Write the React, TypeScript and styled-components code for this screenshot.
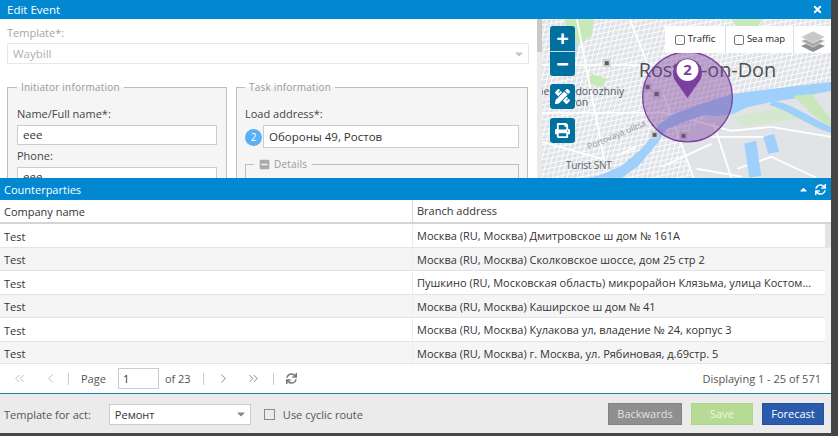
import styled, { createGlobalStyle } from 'styled-components';
import { ChevronLeft, ChevronRight, ChevronsLeft, ChevronsRight } from 'lucide-react';
import { FaTimes, FaSync, FaPrint, FaPencilRuler, FaMinusSquare, FaCaretDown, FaCaretUp } from 'react-icons/fa';

const GlobalStyle = createGlobalStyle`
  html, body { margin: 0; padding: 0; background: #454545; overflow: hidden; }
  * { box-sizing: border-box; }
  body { font-family: "Open Sans", "Liberation Sans", sans-serif; font-size: 11px; color: #333; }
`;

const addresses = [
  'Москва (RU, Москва) Дмитровское ш дом № 161А',
  'Москва (RU, Москва) Сколковское шоссе, дом 25 стр 2',
  'Пушкино (RU, Московская область) микрорайон Клязьма, улица Костомаровская, дом 5',
  'Москва (RU, Москва) Каширское ш дом № 41',
  'Москва (RU, Москва) Кулакова ул, владение № 24, корпус 3',
  'Москва (RU, Москва) г. Москва, ул. Рябиновая, д.69стр. 5',
];

const rowHeights = [24, 23, 24, 23, 24, 22];
const metroStops = [
  [65, 44],
  [106, 68],
  [115, 75],
  [113, 116],
  [142, 117],
];

function CityMap() {
  const streets: string[] = [];
  for (let i = -20; i < 80; i++) {
    const offset = i * 5;
    streets.push(`M${offset} -20 L${offset - 55} 200`);
    streets.push(`M-40 ${offset + 14} L330 ${offset - 60}`);
  }
  return (
    <MapSvg viewBox="0 0 290 159">
      <defs>
        <filter id="soft">
          <feGaussianBlur stdDeviation="0.25" />
        </filter>
      </defs>
      <rect width="290" height="159" fill="#dfe2e6" />
      <g filter="url(#soft)">
        <path d={streets.join(' ')} stroke="#fff" strokeWidth="1" opacity="0.9" fill="none" />
        <path d="M170 92 L290 70 V159 H150 L140 120Z" fill="#e1e4e7" />
        <path d="M23 0 L52 0 L50 16 L40 24 L30 27 L24 14Z M50 55 L66 60 L60 68 L44 64Z M190 0 L222 0 L214 10 L196 8Z" fill="#c9e8b8" />
        <path d="M193 98 L250 86 L262 100 L200 108Z" fill="#d5e8cf" />
        <path d="M0 46 H115 M0 94 H125 L190 112 L230 108 L290 118 M35 0 L66 159 M88 0 L112 60 M122 76 L152 159 M172 104 L190 159 M170 118 H226 M75 137 L95 128 M120 148 L170 125 M155 150 L200 158 M0 123 L60 140 M196 150 L230 138 L275 159" stroke="#fff" strokeWidth="1.8" fill="none" />
        <path d="M290 63 C262 66 228 70 192 75 L162 84 L130 96 L117 106 L109 119 L100 130 L80 147 L57 157 L45 159 L80 159 L97 147 L117 123 L125 110 L140 104 L162 96 L175 97 L192 95 C198 92 202 90 207 88 C220 85 235 82 250 80 C262 78 276 74 290 72Z" fill="#9ed0fb" />
        <path d="M232 82 C250 84 268 98 290 108 L290 114 C268 108 250 92 228 86Z" fill="#9ed0fb" />
        <path d="M252 77 L270 75 L290 100 L290 108 L273 97Z" fill="#c9e6bd" />
        <path d="M203 125 L215 122 L220 157 L208 159Z M222 118 L233 115 L238 133 L227 135Z" fill="#9ed0fb" />
        <path d="M30 18 L36 26 L34 38 L29 30Z" fill="#b6dcf9" />
      </g>
      <MapLabel x="97" y="58" $size={20} $colour="#4a5058" textLength="138">Rostov-on-Don</MapLabel>
      <MapLabel x="-11" y="76" $size={10.5} $colour="#555b62">Zheleznodorozhniy</MapLabel>
      <MapLabel x="16" y="87" $size={10.5} $colour="#555b62">Rayon</MapLabel>
      <MapLabel x="47" y="131" $size={8.5} $colour="#8f959b" transform="rotate(-23 47 131)" textLength="63">Portovaya ulitsa</MapLabel>
      <MapLabel x="24" y="150" $size={10} $colour="#5c6268" textLength="46">Turist SNT</MapLabel>
      {metroStops.map(([x, y]) => (
        <g key={`${x}-${y}`}>
          <rect x={x - 4} y={y - 4} width="8" height="8" fill="#d2d3d4" />
          <rect x={x - 2} y={y - 2} width="4" height="4" fill="#5c5f62" />
        </g>
      ))}
      <circle cx="146" cy="78" r="45" fill="#7b3f9e" fillOpacity="0.42" stroke="#7b3f9e" strokeWidth="1.2" />
      <path d="M146 79 L134 62 A14.5 14.5 0 1 1 158 62Z" fill="#7b3f9e" />
      <circle cx="146" cy="51" r="11" fill="#fff" />
      <MapLabel x="146" y="56" $size={15} $colour="#7b3f9e" $bold textAnchor="middle">2</MapLabel>
    </MapSvg>
  );
}

function LayersIcon() {
  return (
    <svg width="24" height="24" viewBox="0 0 24 24">
      <path d="M12 13 L24 18 L12 24 L0 18Z" fill="#909090" />
      <path d="M12 8 L24 13 L12 19 L0 13Z" fill="#a8a8a8" stroke="#fff" strokeWidth="0.5" />
      <path d="M12 3 L24 9 L12 15 L0 9Z" fill="#c8c8c8" stroke="#fff" strokeWidth="0.5" />
    </svg>
  );
}

export default function App() {
  return (
    <>
      <GlobalStyle />
      <Window>
        <TitleBar>
          <span>Edit Event</span>
          <FaTimes size={11} />
        </TitleBar>
        <TopArea>
          <FormPane>
            <FieldLabel $muted>Template*:</FieldLabel>
            <TemplateSelect>
              Waybill
              <FaCaretDown size={12} color="#c4c4c4" />
            </TemplateSelect>
            <Columns>
              <InitiatorSet>
                <legend>Initiator information</legend>
                <FieldLabel>Name/Full name*:</FieldLabel>
                <TextBox>eee</TextBox>
                <FieldLabel>Phone:</FieldLabel>
                <TextBox>eee</TextBox>
              </InitiatorSet>
              <TaskSet>
                <legend>Task information</legend>
                <FieldLabel>Load address*:</FieldLabel>
                <AddressRow>
                  <Badge>2</Badge>
                  <AddressBox>Обороны 49, Ростов</AddressBox>
                </AddressRow>
                <DetailsSet>
                  <legend>
                    <FaMinusSquare size={11} color="#aaa" /> Details
                  </legend>
                </DetailsSet>
              </TaskSet>
            </Columns>
          </FormPane>
          <Scrollbar />
          <MapPane>
            <CityMap />
            <ZoomGroup>
              <ZoomButton>+</ZoomButton>
              <ZoomButton>−</ZoomButton>
            </ZoomGroup>
            <ToolButton $top={65}>
              <FaPencilRuler size={15} />
            </ToolButton>
            <ToolButton $top={99}>
              <FaPrint size={15} />
            </ToolButton>
            <LayerPanel>
              <LayerToggle $width={60}>
                <MapCheck /> Traffic
              </LayerToggle>
              <LayerToggle $width={67}>
                <MapCheck /> Sea map
              </LayerToggle>
              <LayerIconCell>
                <LayersIcon />
              </LayerIconCell>
            </LayerPanel>
          </MapPane>
        </TopArea>
        <PanelBar>
          <span>Counterparties</span>
          <PanelTools>
            <FaCaretUp size={11} />
            <FaSync size={11} />
          </PanelTools>
        </PanelBar>
        <GridHeader>
          <CompanyCell>Company name</CompanyCell>
          <AddressCell>Branch address</AddressCell>
        </GridHeader>
        <GridBody>
          <Rows>
            {addresses.map((address, i) => (
              <Row key={address} $striped={i % 2 === 1} $height={rowHeights[i]}>
                <CompanyCell>Test</CompanyCell>
                <AddressCell>{address}</AddressCell>
              </Row>
            ))}
          </Rows>
          <GridScroll />
        </GridBody>
        <Pager>
          <PagerIcon $muted $gap={16}>
            <ChevronsLeft size={15} strokeWidth={1.4} />
          </PagerIcon>
          <PagerIcon $muted $gap={10}>
            <ChevronLeft size={15} strokeWidth={1.4} />
          </PagerIcon>
          <PagerSep />
          <PagerText>Page</PagerText>
          <PageInput>1</PageInput>
          <PagerText>of 23</PagerText>
          <PagerSep />
          <PagerIcon $gap={15}>
            <ChevronRight size={15} strokeWidth={1.4} />
          </PagerIcon>
          <PagerIcon $gap={12}>
            <ChevronsRight size={15} strokeWidth={1.4} />
          </PagerIcon>
          <PagerSep />
          <PagerIcon $gap={8}>
            <FaSync size={11} />
          </PagerIcon>
          <Displaying>Displaying 1 - 25 of 571</Displaying>
        </Pager>
        <Footer>
          <FooterLabel>Template for act:</FooterLabel>
          <ActSelect>
            Ремонт
            <FaCaretDown size={12} color="#888" />
          </ActSelect>
          <CyclicBox />
          <FooterLabel>Use cyclic route</FooterLabel>
          <FooterButtons>
            <ActionButton $bg="#8f8f8f" $line="#828282" $width={74} $faded>
              Backwards
            </ActionButton>
            <ActionButton $bg="#b7db94" $line="#aed68a" $width={62} $faded>
              Save
            </ActionButton>
            <ActionButton $bg="#2a5cab" $line="#25539b" $width={62}>
              Forecast
            </ActionButton>
          </FooterButtons>
        </Footer>
      </Window>
    </>
  );
}

const Window = styled.div`
  width: 831px;
  height: 433px;
  background: #fff;
  display: flex;
  flex-direction: column;
  overflow: hidden;
`;

const TitleBar = styled.div`
  height: 19px;
  flex: none;
  background: #0288d1;
  color: #fff;
  font-size: 11.5px;
  display: flex;
  align-items: center;
  justify-content: space-between;
  padding: 0 8px 0 7px;
`;

const TopArea = styled.div`
  height: 159px;
  flex: none;
  display: flex;
  overflow: hidden;
`;

const FormPane = styled.div`
  width: 537px;
  flex: none;
  padding: 6px 8px 0 7px;
  overflow: hidden;
`;

const FieldLabel = styled.div<{ $muted?: boolean }>`
  font-size: 11px;
  line-height: 16px;
  color: ${(p) => (p.$muted ? '#a5a5a5' : '#444')};
`;

const TemplateSelect = styled.div`
  height: 21px;
  margin-top: 2px;
  border: 1px solid #e8e8e8;
  color: #b0b0b0;
  font-size: 11.5px;
  display: flex;
  align-items: center;
  justify-content: space-between;
  padding: 0 3px 0 5px;
`;

const Columns = styled.div`
  display: flex;
  gap: 9px;
  margin-top: 16px;
`;

const GroupSet = styled.fieldset`
  margin: 0;
  background: #f5f5f5;
  border: 1px solid #bdbdbd;
  height: 140px;

  legend {
    padding: 0 4px;
    margin-left: 0;
    color: #999;
    font-size: 10px;
    line-height: 14px;
    letter-spacing: 0.2px;
  }
`;

const InitiatorSet = styled(GroupSet)`
  width: 220px;
  flex: none;
  padding: 12px 9px 0;
`;

const TaskSet = styled(GroupSet)`
  width: 292px;
  flex: none;
  padding: 12px 8px 0;
`;

const TextBox = styled.div`
  height: 20px;
  margin: 3px 0 3px;
  background: #fff;
  border: 1px solid #ccc;
  padding: 0 5px;
  line-height: 18px;
  font-size: 11.5px;
`;

const AddressRow = styled.div`
  display: flex;
  align-items: center;
  margin-top: 3px;
`;

const Badge = styled.span`
  width: 17px;
  height: 17px;
  flex: none;
  margin-top: 1px;
  border-radius: 50%;
  background: #5ab0f2;
  color: #fff;
  font-size: 10px;
  text-align: center;
  line-height: 17px;
`;

const AddressBox = styled.div`
  flex: 1;
  height: 23px;
  margin-left: 1px;
  background: #fff;
  border: 1px solid #ccc;
  padding: 0 5px;
  line-height: 22px;
  font-size: 11.5px;
`;

const DetailsSet = styled(GroupSet)`
  margin-top: 9px;
  padding: 0;

  legend {
    margin-left: 8px;
    padding: 0 5px;
    display: flex;
    align-items: center;
    gap: 4px;
  }
`;

const Scrollbar = styled.div`
  width: 5px;
  flex: none;
  background: linear-gradient(#c9c9c9 33px, #eaeaea 33px);
`;

const MapPane = styled.div`
  flex: 1;
  position: relative;
  overflow: hidden;
`;

const MapSvg = styled.svg`
  display: block;
  width: 100%;
  height: 100%;
`;

const MapLabel = styled.text<{ $size: number; $colour: string; $bold?: boolean }>`
  font-family: "Open Sans", sans-serif;
  font-size: ${(p) => p.$size}px;
  font-weight: ${(p) => (p.$bold ? 700 : 400)};
  fill: ${(p) => p.$colour};
`;

const ZoomGroup = styled.div`
  position: absolute;
  left: 8px;
  top: 7px;
  display: flex;
  flex-direction: column;
  gap: 1px;
  border-radius: 3px;
  overflow: hidden;
  background: #d9d9d9;
`;

const ZoomButton = styled.div`
  width: 25px;
  height: 24.5px;
  background: #00709f;
  color: #fff;
  font-size: 22px;
  font-weight: 700;
  line-height: 23px;
  text-align: center;
`;

const ToolButton = styled.div<{ $top: number }>`
  position: absolute;
  left: 8px;
  top: ${(p) => p.$top}px;
  width: 25px;
  height: 25px;
  border-radius: 3px;
  background: #00709f;
  color: #fff;
  display: flex;
  align-items: center;
  justify-content: center;
`;

const LayerPanel = styled.div`
  position: absolute;
  right: 0;
  top: 7px;
  height: 27px;
  display: flex;
  gap: 1px;
  background: #ddd;
`;

const LayerToggle = styled.div<{ $width: number }>`
  width: ${(p) => p.$width}px;
  padding-bottom: 2px;
  background: #fff;
  color: #222;
  font-size: 9.5px;
  display: flex;
  align-items: center;
  justify-content: center;
  gap: 3px;
`;

const MapCheck = styled.span`
  width: 10px;
  height: 10px;
  margin-top: 2px;
  border: 1px solid #767676;
  border-radius: 2px;
  background: #fff;
`;

const LayerIconCell = styled.div`
  width: 37px;
  background: #fff;
  display: flex;
  align-items: center;
  justify-content: center;
`;

const PanelBar = styled.div`
  height: 22px;
  flex: none;
  background: #0288d1;
  color: #fff;
  font-size: 11px;
  display: flex;
  align-items: center;
  justify-content: space-between;
  padding: 0 5px 0 4px;
`;

const PanelTools = styled.div`
  display: flex;
  align-items: center;
  gap: 6px;
`;

const GridHeader = styled.div`
  height: 24px;
  flex: none;
  display: flex;
  border-bottom: 2px solid #d4d4d4;
`;

const CompanyCell = styled.div`
  width: 413px;
  flex: none;
  padding: 0 4px;
  display: flex;
  align-items: center;
  border-right: 1px solid #d8d8d8;
`;

const AddressCell = styled.div`
  flex: 1;
  min-width: 0;
  padding: 0 10px 0 4px;
  line-height: 22px;
  white-space: nowrap;
  overflow: hidden;
  text-overflow: ellipsis;
`;

const GridBody = styled.div`
  height: 140px;
  flex: none;
  display: flex;
  border-bottom: 1px solid #d4d4d4;
`;

const Rows = styled.div`
  width: 825px;
  flex: none;
`;

const Row = styled.div<{ $striped: boolean; $height: number }>`
  height: ${(p) => p.$height}px;
  padding-top: 1px;
  display: flex;
  background: ${(p) => (p.$striped ? '#f5f5f5' : '#fff')};
  border-bottom: 1px solid #e4e4e4;

  ${CompanyCell} {
    border-right-color: #ececec;
  }
`;

const GridScroll = styled.div`
  flex: 1;
  background: linear-gradient(#e4e4e4 24px, #f4f4f4 24px);
`;

const Pager = styled.div`
  height: 30px;
  flex: none;
  display: flex;
  align-items: center;
  padding: 0 10px 0 12px;
  border-bottom: 1px solid #1f80b8;
`;

const PagerIcon = styled.span<{ $muted?: boolean; $gap: number }>`
  display: inline-flex;
  margin-right: ${(p) => p.$gap}px;
  color: ${(p) => (p.$muted ? '#b5b5b5' : '#777')};
`;

const PagerSep = styled.span`
  width: 1px;
  height: 12px;
  margin-right: 12px;
  background: #ccc;
`;

const PagerText = styled.span`
  color: #555;
  margin-right: 12px;
`;

const PageInput = styled.div`
  width: 41px;
  height: 21px;
  margin-right: 6px;
  border: 1px solid #ccc;
  padding: 0 4px;
  line-height: 20px;
`;

const Displaying = styled.span`
  margin-left: auto;
  color: #555;
`;

const Footer = styled.div`
  flex: 1;
  background: #ebebeb;
  display: flex;
  align-items: center;
  padding: 1px 7px 0 4px;
`;

const FooterLabel = styled.span`
  color: #555;
`;

const ActSelect = styled.div`
  width: 142px;
  height: 21px;
  margin: 0 13px 0 18px;
  background: #fff;
  border: 1px solid #ccc;
  padding: 0 3px 0 5px;
  display: flex;
  align-items: center;
  justify-content: space-between;
`;

const CyclicBox = styled.span`
  width: 11px;
  height: 11px;
  margin-right: 8px;
  border: 1px solid #8a8a8a;
`;

const FooterButtons = styled.div`
  margin-left: auto;
  display: flex;
  gap: 9px;
`;

const ActionButton = styled.div<{ $bg: string; $line: string; $width: number; $faded?: boolean }>`
  width: ${(p) => p.$width}px;
  height: 22px;
  background: ${(p) => p.$bg};
  border: 1px solid ${(p) => p.$line};
  color: ${(p) => (p.$faded ? 'rgba(255,255,255,0.75)' : '#fff')};
  line-height: 20px;
  text-align: center;
`;
